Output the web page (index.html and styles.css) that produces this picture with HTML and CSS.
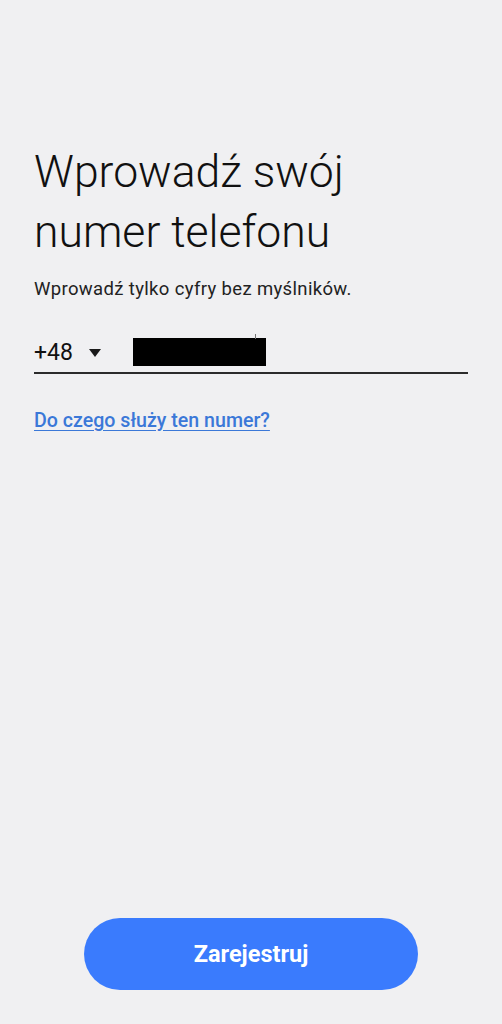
FILE: index.html
```html
<!DOCTYPE html>
<html lang="pl">
<head>
<meta charset="utf-8">
<link rel="stylesheet" href="styles.css">
</head>
<body>
<div class="screen">
  <main class="content">
    <h1 class="title">Wprowadź swój<br>numer telefonu</h1>
    <p class="hint">Wprowadź tylko cyfry bez myślników.</p>
    <div class="phone-row">
      <div class="prefix">
        <span class="code">+48</span>
        <svg class="caret" width="12" height="8" viewBox="0 0 12 8"><path d="M0 0 H12 L6 8 Z" fill="#1a1a1a"/></svg>
      </div>
      <div class="number"><span class="redacted"></span><span class="tick"></span></div>
    </div>
    <a class="why" href="#">Do czego służy ten numer?</a>
  </main>
  <footer class="footer">
    <button class="register">Zarejestruj</button>
  </footer>
</div>
</body>
</html>
```
FILE: styles.css
```css
html, body {
  margin: 0;
  padding: 0;
  background: #f0f0f2;
}
.screen {
  width: 502px;
  height: 1024px;
  display: flex;
  flex-direction: column;
  font-family: Roboto, "Noto Sans", sans-serif;
}
.content {
  flex: 1;
  padding: 142px 34px 0 34px;
  display: flex;
  flex-direction: column;
}
.title {
  margin: 0;
  font-weight: 300;
  font-size: 44.5px;
  line-height: 60px;
  color: #111;
}
.hint {
  margin: 16px 0 0 0;
  font-size: 18.5px;
  line-height: 22px;
  letter-spacing: 0.35px;
  color: #222;
}
.phone-row {
  margin-top: 32px;
  display: flex;
  align-items: center;
  border-bottom: 2.5px solid #2b2b2b;
  height: 40px;
}
.prefix {
  display: flex;
  align-items: center;
  width: 99px;
  gap: 16px;
}
.code {
  font-size: 23px;
  color: #111;
}
.caret {
  margin-top: 1px;
}
.number {
  position: relative;
  display: flex;
}
.redacted {
  display: block;
  width: 133px;
  height: 28px;
  background: #000;
}
.tick {
  position: absolute;
  left: 122px;
  top: -4px;
  width: 1px;
  height: 5px;
  background: #777;
}
.why {
  margin-top: 35px;
  font-size: 19.6px;
  font-weight: 500;
  color: #3b78d8;
  text-decoration: underline;
  text-underline-offset: 3px;
  align-self: flex-start;
}
.footer {
  display: flex;
  justify-content: center;
  padding-bottom: 34px;
}
.register {
  width: 334px;
  height: 72px;
  border: none;
  border-radius: 36px;
  background: #3a7bfd;
  color: #fff;
  font-family: Roboto, "Noto Sans", sans-serif;
  font-weight: 700;
  font-size: 23.5px;
}
```
